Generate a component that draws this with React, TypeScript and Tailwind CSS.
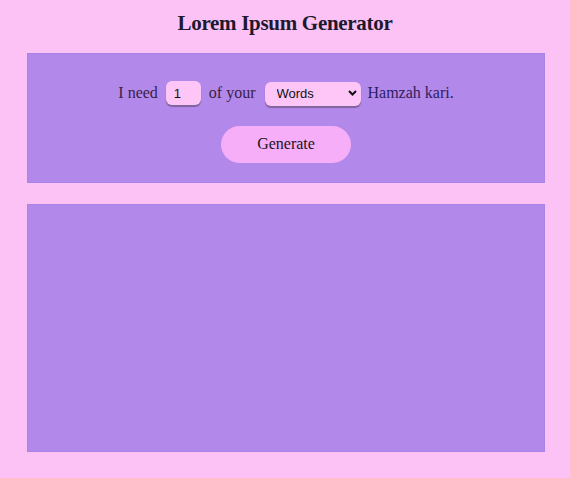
import React, { useState } from "react";

export default function App() {
  const [count, setCount] = useState("1");
  const [unit, setUnit] = useState("Words");

  return (
    <div
      className="min-h-[478px] bg-[#fdc2f5] pb-[27px]"
      style={{ fontFamily: '"Liberation Serif", "Times New Roman", serif' }}
    >
      {/* Title */}
      <h1 className="pt-[11px] pb-[18px] text-center text-[21px] font-bold leading-[24px] tracking-[-0.3px] text-[#1e1a2e]">
        Lorem Ipsum Generator
      </h1>

      {/* Controls */}
      <div className="ml-[27px] w-[518px] border border-[#a983e6] bg-[#b388eb] pt-[27px] pb-[19px]">
        <div className="flex items-center justify-center text-[16px] text-[#3a2144]">
          <span>I need</span>
          <input
            value={count}
            onChange={(e) => setCount(e.target.value)}
            className="ml-[8px] h-[24px] w-[35px] rounded-[6px] bg-[#fdc6f7] px-[8px] text-[13px] text-[#111] shadow-[0_2px_1px_rgba(90,70,90,0.55)] outline-none"
            style={{ fontFamily: '"Liberation Sans", Arial, sans-serif' }}
          />
          <span className="ml-[8px]">of your</span>
          <div className="relative ml-[9px]">
            <select
              value={unit}
              onChange={(e) => setUnit(e.target.value)}
              className="h-[24px] w-[96px] appearance-none rounded-[6px] bg-[#fdc6f7] pl-[12px] text-[13px] text-[#111] shadow-[0_2px_1px_rgba(90,70,90,0.55)] outline-none"
              style={{ fontFamily: '"Liberation Sans", Arial, sans-serif' }}
            >
              <option>Words</option>
              <option>Sentences</option>
              <option>Paragraphs</option>
            </select>
            <svg
              className="pointer-events-none absolute right-[4px] top-[9px]"
              width="9"
              height="6"
              viewBox="0 0 9 6"
            >
              <path d="M1 1l3.5 3.5L8 1" fill="none" stroke="#111" strokeWidth="2" />
            </svg>
          </div>
          <span className="ml-[7px] text-[#2b2160]">Hamzah kari.</span>
        </div>

        <div className="mt-[20px] flex justify-center">
          <button className="h-[37px] w-[130px] rounded-full bg-[#f7aef8] text-[16px] text-[#1a1420]">
            Generate
          </button>
        </div>
      </div>

      {/* Output */}
      <div className="ml-[27px] mt-[21px] h-[248px] w-[518px] border border-[#a983e6] bg-[#b388eb]" />
    </div>
  );
}
